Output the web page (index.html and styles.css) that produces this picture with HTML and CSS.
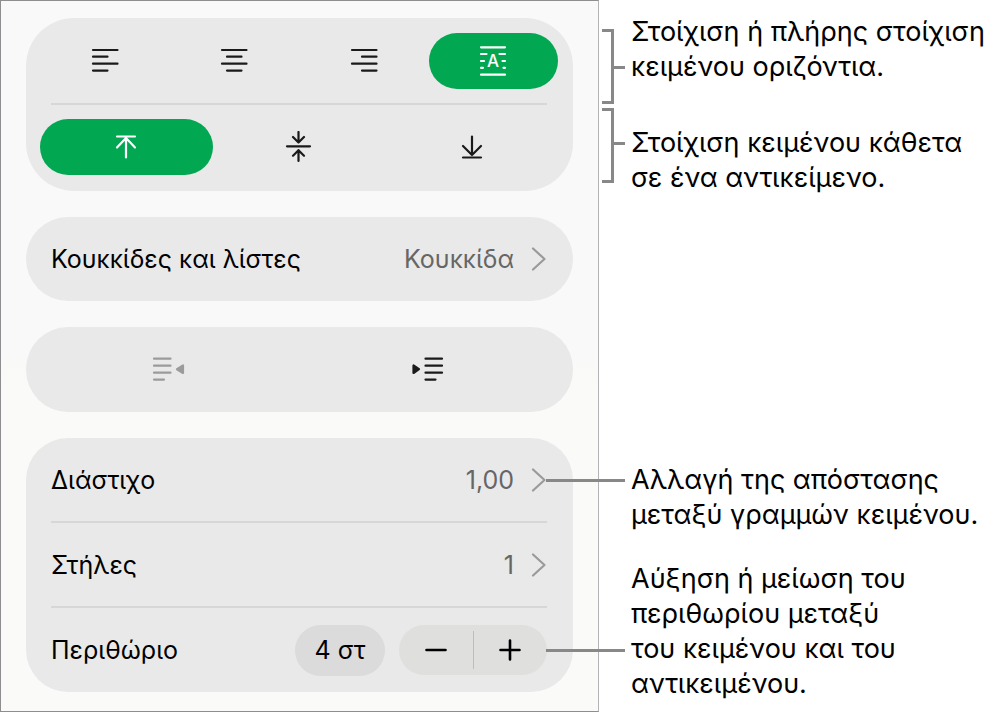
FILE: index.html
```html
<!DOCTYPE html>
<html lang="el">

<head>
    <meta charset="UTF-8">
    <meta name="viewport" content="width=device-width, initial-scale=1.0">
    <title>Στοίχιση κειμένου</title>
    <link rel="stylesheet" href="styles.css">
</head>

<body>
    <div class="figure">
        <div class="panel">
            <div class="card align">
                <div class="segments">
                    <button class="seg" aria-label="Στοίχιση αριστερά">
                        <svg class="icon" width="28" height="28" viewBox="0 0 28 28">
                            <path d="M2 3H26.500M2 9.700H16.500M2 16.700H26.500M2 23.600H16.500" />
                        </svg>
                    </button>
                    <button class="seg" aria-label="Στοίχιση στο κέντρο">
                        <svg class="icon" width="28" height="28" viewBox="0 0 28 28">
                            <path d="M2 3H26.500M7 9.700H21.500M2 16.700H26.500M7 23.600H21.500" />
                        </svg>
                    </button>
                    <button class="seg" aria-label="Στοίχιση δεξιά">
                        <svg class="icon" width="28" height="28" viewBox="0 0 28 28">
                            <path d="M2 3H26.500M12 9.700H26.500M2 16.700H26.500M12 23.600H26.500" />
                        </svg>
                    </button>
                    <button class="seg active" aria-label="Πλήρης στοίχιση">
                        <svg class="icon" width="32" height="32" viewBox="0 0 32 32">
                            <path d="M4 2.300H28M4 9H9.500M22.500 9H28M4 16H7M25.500 16H28M4 22.800H6M26.500 22.800H28M4 29.700H28" />
                            <text x="16" y="22" text-anchor="middle">A</text>
                        </svg>
                    </button>
                </div>
                <div class="line"></div>
                <div class="segments">
                    <button class="seg active" aria-label="Στοίχιση επάνω">
                        <svg class="icon" width="28" height="28" viewBox="0 0 28 28">
                            <path d="M5 3.500H23M14 5V24.500M5 14.500L14 5L23 14.500" />
                        </svg>
                    </button>
                    <button class="seg" aria-label="Στοίχιση στη μέση">
                        <svg class="icon" width="32" height="32" viewBox="0 0 32 32">
                            <path d="M4 15.300H27M15.500 1V11.500M10 6L15.500 11.500L21 6M15.500 30V19M10 24.700L15.500 19.200L21 24.700" />
                        </svg>
                    </button>
                    <button class="seg" aria-label="Στοίχιση κάτω">
                        <svg class="icon" width="28" height="28" viewBox="0 0 28 28">
                            <path d="M5 24.500H23M14 3.500V22M5 13L14 22L23 13" />
                        </svg>
                    </button>
                </div>
            </div>

            <div class="card">
                <button class="row">
                    <span class="name">Κουκκίδες και λίστες</span>
                    <span class="value">Κουκκίδα</span>
                    <svg class="chevron" width="16" height="26" viewBox="0 0 16 26">
                        <path d="M2 2.500L13.500 13L2 23.500" />
                    </svg>
                </button>
            </div>

            <div class="card indent">
                <div class="segments">
                    <button class="seg" aria-label="Μείωση εσοχής" disabled>
                        <svg class="icon" width="34" height="32" viewBox="0 0 34 32">
                            <path d="M2 4.700H18.500M2 11.700H18.500M2 18.700H18.500M2 25.600H12" />
                            <path class="solid" d="M25 15.200L31 11.500V19Z" />
                        </svg>
                    </button>
                    <button class="seg" aria-label="Αύξηση εσοχής">
                        <svg class="icon" width="34" height="32" viewBox="0 0 34 32">
                            <path d="M14.500 4.700H31M14.500 11.700H31M14.500 18.700H31M14.500 25.600H24.500" />
                            <path class="solid" d="M8 15.200L2.500 11.500V19Z" />
                        </svg>
                    </button>
                </div>
            </div>

            <div class="card">
                <button class="row">
                    <span class="name">Διάστιχο</span>
                    <span class="value">1,00</span>
                    <svg class="chevron" width="16" height="26" viewBox="0 0 16 26">
                        <path d="M2 2.500L13.500 13L2 23.500" />
                    </svg>
                </button>
                <button class="row">
                    <span class="name">Στήλες</span>
                    <span class="value">1</span>
                    <svg class="chevron" width="16" height="26" viewBox="0 0 16 26">
                        <path d="M2 2.500L13.500 13L2 23.500" />
                    </svg>
                </button>
                <div class="row">
                    <label class="name" for="margin">Περιθώριο</label>
                    <input type="text" class="amount" id="margin" value="4 στ">
                    <div class="stepper">
                        <button class="step" aria-label="Μείωση">
                            <svg width="24" height="24" viewBox="0 0 24 24">
                                <path d="M2.500 12H21.500" />
                            </svg>
                        </button>
                        <button class="step" aria-label="Αύξηση">
                            <svg width="24" height="24" viewBox="0 0 24 24">
                                <path d="M2.500 12H21.500M12 2.500V21.500" />
                            </svg>
                        </button>
                    </div>
                </div>
            </div>
        </div>

        <div class="callouts">
            <p class="callout bracket">Στοίχιση ή πλήρης στοίχιση<br>κειμένου οριζόντια.</p>
            <p class="callout bracket second">Στοίχιση κειμένου κάθετα<br>σε ένα αντικείμενο.</p>
            <p class="callout leader spacing">Αλλαγή της απόστασης<br>μεταξύ γραμμών κειμένου.</p>
            <p class="callout leader inset">Αύξηση ή μείωση του<br>περιθωρίου μεταξύ<br>του κειμένου και του<br>αντικειμένου.</p>
        </div>
    </div>
</body>

</html>
```
FILE: styles.css
```css
* {
    margin: 0;
    padding: 0;
    box-sizing: border-box;
}

body {
    background-color: #ffffff;
    color: #000000;
    font-family: Inter, "Liberation Sans", sans-serif;
    font-size: 25px;
}

button,
input {
    border: none;
    background: none;
    color: inherit;
    font: inherit;
}

button {
    cursor: pointer;
}

.figure {
    display: grid;
    grid-template-columns: minmax(0, 1fr) 406px;
    align-items: start;
}

/* Format panel */

.panel {
    display: flex;
    flex-direction: column;
    gap: 26px;
    padding: 17px 25px 19px 25px;
    border: 1px solid #8e8e90;
    border-right-color: #b4b4b6;
    background: linear-gradient(#f9f9f9 50%, #fafaf8 54%);
}

.card {
    background-color: #e9e9e9;
    border-radius: 42px;
}

.align {
    padding: 15px 15px 16px 14px;
    border-radius: 48px;
}

.indent {
    padding: 15px 16px 14px 13px;
}

.segments {
    display: flex;
}

.seg {
    display: flex;
    flex: 1;
    justify-content: center;
    align-items: center;
    height: 56px;
    border-radius: 28px;
    color: #1a1a1a;
}

.seg.active {
    background-color: #02a751;
    color: #ffffff;
}

.seg:disabled {
    color: #9b9b9b;
}

.line {
    height: 2px;
    margin: 14px 11px;
    background-color: #d7d7d7;
}

.icon,
.chevron,
.step svg {
    fill: none;
    stroke: currentColor;
    stroke-width: 2.2;
    stroke-linecap: round;
    stroke-linejoin: round;
}

.icon .solid {
    fill: currentColor;
}

.icon text {
    fill: currentColor;
    stroke: none;
    font-size: 17px;
    font-weight: 500;
}

.row {
    display: flex;
    align-items: center;
    width: calc(100% - 51px);
    height: 84px;
    margin: 0 26px 0 25px;
    text-align: left;
}

.row:not(:last-child) {
    height: 85px;
    border-bottom: 2px solid #d7d7d7;
}

.name {
    flex: 1;
}

.value {
    color: #666666;
}

.chevron {
    margin-left: 17px;
    color: #9a9a9a;
}

.amount {
    width: 90px;
    height: 51px;
    border-radius: 26px;
    background-color: #dbdbdb;
    text-align: center;
}

.stepper {
    display: flex;
    align-items: center;
    width: 148px;
    height: 50px;
    margin-left: 14px;
    border-radius: 25px;
    background-color: #dfdfdd;
}

.step {
    display: flex;
    flex: 1;
    justify-content: center;
    align-items: center;
    height: 38px;
}

.step svg {
    stroke-width: 2.6;
}

.step + .step {
    border-left: 1px solid #bdbdbb;
}

/* Callouts */

.callouts {
    padding-top: 14px;
}

.callout {
    position: relative;
    padding-left: 32px;
    font-size: 27px;
    line-height: 35px;
    white-space: nowrap;
}

.second {
    margin-top: 41px;
}

.spacing {
    margin-top: 267px;
}

.inset {
    margin-top: 29px;
}

.bracket::before {
    content: "";
    position: absolute;
    top: 15px;
    left: 3px;
    width: 9px;
    height: 69px;
    border: 3px solid #888888;
    border-left: none;
}

.bracket::after,
.leader::after {
    content: "";
    position: absolute;
    top: 52px;
    left: 15px;
    width: 11px;
    height: 3px;
    background-color: #888888;
}

.second::before {
    top: -17px;
}

.second::after {
    top: 17px;
}

/* leaders start inside the panel, at the control they name */
.leader::after {
    left: -53px;
    width: 79px;
}

.spacing::after {
    top: 17px;
}

.inset::after {
    top: 88px;
}
```
